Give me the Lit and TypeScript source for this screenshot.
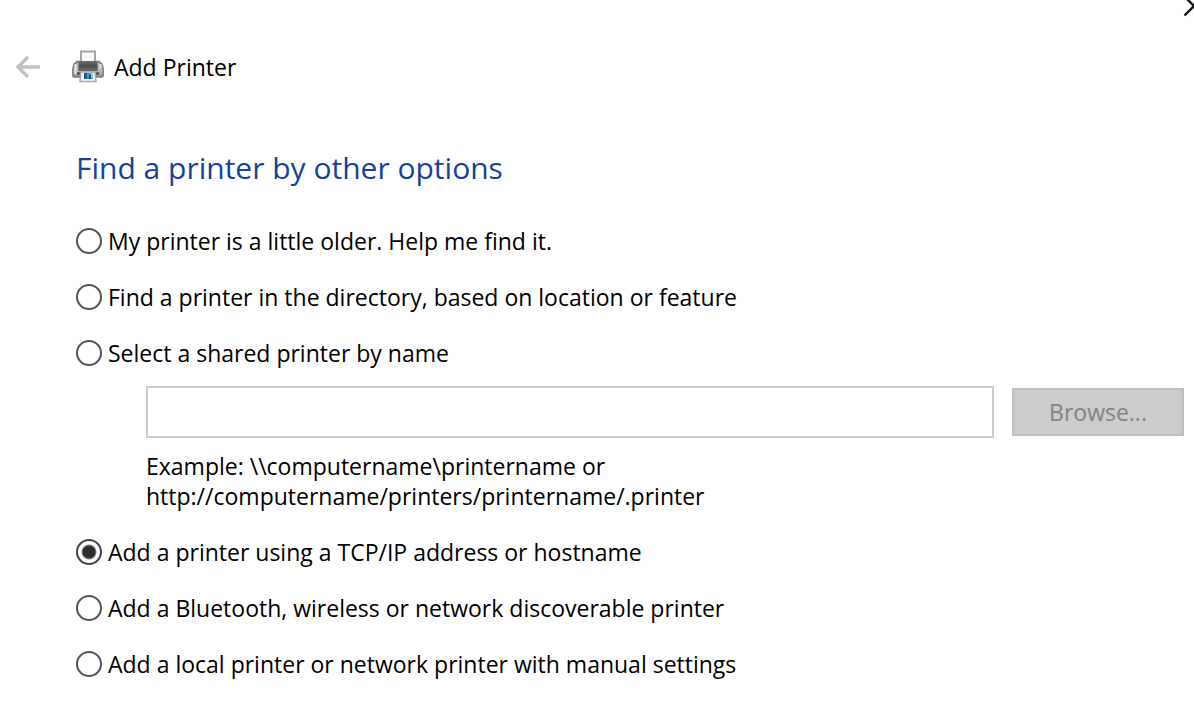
import { LitElement, html, css, nothing } from "lit";
import { customElement, state } from "lit/decorators.js";

interface PrinterOption {
  id: string;
  label: string;
}

const OPTIONS: PrinterOption[] = [
  { id: "older", label: "My printer is a little older. Help me find it." },
  { id: "directory", label: "Find a printer in the directory, based on location or feature" },
  { id: "shared", label: "Select a shared printer by name" },
  { id: "tcpip", label: "Add a printer using a TCP/IP address or hostname" },
  { id: "bluetooth", label: "Add a Bluetooth, wireless or network discoverable printer" },
  { id: "local", label: "Add a local printer or network printer with manual settings" },
];

@customElement("app-root")
export class AppRoot extends LitElement {
  @state() private selected = "tcpip";

  static styles = css`
    :host {
      display: block;
      position: relative;
      box-sizing: border-box;
      min-height: 100vh;
      overflow: hidden;
      background: #fff;
      color: #000;
      font-family: "Open Sans", "Noto Sans", sans-serif;
      font-size: 23px;
      line-height: 30px;
    }
    button {
      font: inherit;
      padding: 0;
    }
    svg {
      display: block;
    }
    .close {
      position: absolute;
      top: -5px;
      right: -11px;
      border: 0;
      background: none;
    }
    .header {
      display: flex;
      align-items: center;
      padding: 50px 16px 0;
    }
    .back {
      border: 0;
      background: none;
      margin-right: 30px;
    }
    .title {
      margin-left: 10px;
    }
    main {
      padding: 64px 10px 24px 76px;
    }
    h1 {
      margin: 0 0 38px;
      font-size: 30px;
      line-height: 40px;
      font-weight: 400;
      color: #173f9c;
    }
    fieldset {
      margin: 0;
      padding: 0;
      border: 0;
      min-width: 0;
      display: flex;
      flex-direction: column;
      gap: 26px;
    }
    .option {
      display: flex;
      align-items: center;
      gap: 6px;
    }
    .option input {
      appearance: none;
      flex: none;
      box-sizing: border-box;
      width: 26px;
      height: 26px;
      margin: 0;
      border: 2px solid #555;
      border-radius: 50%;
      background: #fff;
    }
    .option input:checked {
      border-color: #444;
      background: radial-gradient(circle, #2d2d2d 6px, #fff 8px);
    }
    .shared {
      margin: -8px 0 0 70px;
    }
    .entry {
      display: flex;
      align-items: center;
      gap: 18px;
    }
    .name {
      flex: 1;
      min-width: 0;
      box-sizing: border-box;
      height: 52px;
      padding: 0 8px;
      border: 2px solid #ccc;
      background: #fff;
      font: inherit;
    }
    .browse {
      box-sizing: border-box;
      width: 172px;
      height: 48px;
      border: 2px solid #bfbfbf;
      background: #ccc;
      color: #838383;
    }
    .example {
      margin: 13px 0 0;
    }
  `;

  private renderShared() {
    const disabled = this.selected !== "shared";
    return html`
      <div class="shared">
        <div class="entry">
          <input class="name" type="text" aria-label="Shared printer name" ?disabled=${disabled} />
          <button class="browse" type="button" ?disabled=${disabled}>Browse...</button>
        </div>
        <p class="example">
          Example: \\\\computername\\printername or<br />http://computername/printers/printername/.printer
        </p>
      </div>
    `;
  }

  render() {
    return html`
      <button class="close" type="button" aria-label="Close">
        <svg width="22" height="22" viewBox="0 0 22 22" fill="none" stroke="#111" stroke-width="2.4">
          <path d="M1.5 1.5 20.5 20.5M20.5 1.5 1.5 20.5" />
        </svg>
      </button>
      <header class="header">
        <button class="back" type="button" aria-label="Back" disabled>
          <svg width="26" height="24" viewBox="0 0 26 24" fill="none" stroke="#c2c2c2" stroke-width="3.4">
            <path d="M24 12H2M12 2 2 12l10 10" />
          </svg>
        </button>
        <svg width="32" height="34" viewBox="0 0 32 34" aria-hidden="true">
          <defs>
            <linearGradient id="body" x1="0" y1="0" x2="0" y2="1">
              <stop offset="0" stop-color="#9b9da0" />
              <stop offset="0.5" stop-color="#c6c8cb" />
              <stop offset="1" stop-color="#8b8d91" />
            </linearGradient>
            <linearGradient id="top" x1="0" y1="0" x2="0" y2="1">
              <stop offset="0" stop-color="#6d6f71" />
              <stop offset="0.5" stop-color="#4b4d4f" />
              <stop offset="1" stop-color="#6a6c6e" />
            </linearGradient>
          </defs>
          <path
            d="M5 11.500h22l3 2.500 1.200 5v7l-1.200 1H2L.8 26v-7L2 14z"
            fill="url(#body)"
            stroke="#77797d"
            stroke-width="1.400"
          />
          <path d="M9 12V1.500h14V12" fill="#f8f8f8" stroke="#a2a2a2" stroke-width="2" />
          <path d="M7 11h18l1 10H6z" fill="url(#top)" />
          <path d="M3.500 14v10M28.500 14v4" stroke="#e4e5e8" stroke-width="2" />
          <path d="M5 22h22v3H5z" fill="#5a5c5f" />
          <path d="M28 19h2v3h-2z" fill="#7be35c" />
          <path d="M9 22h14l1 9.500H8z" fill="#f7f7f7" stroke="#aaa" stroke-width="1.500" />
          <path d="M12 23h9v6h-9z" fill="#2f9bd0" />
          <path d="M12 23h3v6h-3z" fill="#1c58a8" />
          <path d="M17 25h2v4h-2z" fill="#194f69" />
          <path d="M19 23h2v5h-2z" fill="#8dd2a0" />
        </svg>
        <span class="title">Add Printer</span>
      </header>
      <main>
        <h1 id="heading">Find a printer by other options</h1>
        <fieldset aria-labelledby="heading">
          ${OPTIONS.map(
            (option) => html`
              <label class="option">
                <input
                  type="radio"
                  name="method"
                  .checked=${this.selected === option.id}
                  @change=${() => (this.selected = option.id)}
                />
                <span>${option.label}</span>
              </label>
              ${option.id === "shared" ? this.renderShared() : nothing}
            `
          )}
        </fieldset>
      </main>
    `;
  }
}
